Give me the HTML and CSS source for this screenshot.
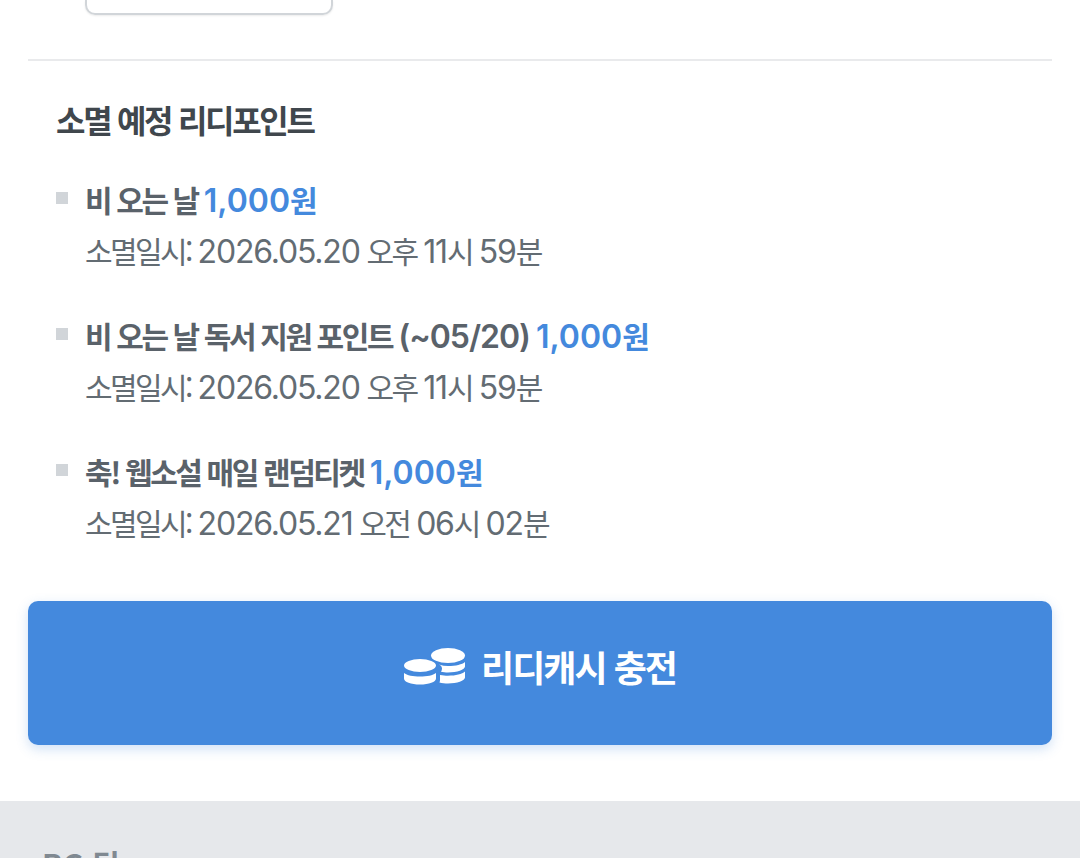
FILE: index.html
```html
<!DOCTYPE html>
<html lang="ko">
<head>
  <meta charset="UTF-8" />
  <title>소멸 예정 리디포인트</title>
  <link rel="stylesheet" href="styles.css">
</head>
<body>
  <div class="top-area">
    <div class="outline-button"></div>
  </div>

  <div class="expire-section">
    <h3 class="expire-title">소멸 예정 리디포인트</h3>
    <ul class="expire-list">
      <li class="expire-item">
        <div class="expire-name">비 오는 날 <span class="amount"><span class="num">1,000</span>원</span></div>
        <div class="expire-date">소멸일시: <span class="num">2026.05.20</span> 오후 <span class="num">11</span>시 <span class="num">59</span>분</div>
      </li>
      <li class="expire-item">
        <div class="expire-name">비 오는 날 독서 지원 포인트 <span class="num">(~05/20)</span> <span class="amount"><span class="num">1,000</span>원</span></div>
        <div class="expire-date">소멸일시: <span class="num">2026.05.20</span> 오후 <span class="num">11</span>시 <span class="num">59</span>분</div>
      </li>
      <li class="expire-item">
        <div class="expire-name">축! 웹소설 매일 랜덤티켓 <span class="amount"><span class="num">1,000</span>원</span></div>
        <div class="expire-date">소멸일시: <span class="num">2026.05.21</span> 오전 <span class="num">06</span>시 <span class="num">02</span>분</div>
      </li>
    </ul>
  </div>

  <div class="charge-wrap">
    <div class="charge-button">
      <svg class="coin-icon" width="62" height="40" viewBox="0 0 62 40">
        <g fill="#fff">
          <ellipse cx="44" cy="7.500" rx="17" ry="7.500"/>
          <path d="M35 16.500c3 1 6 1.500 9 1.500 8 0 14-1.500 17-4v4.500c0 3-8 6-17 6-2.500 0-5-.2-7-.7 .6-1 1-2 1-3.300 0-1.500-1-3-3-4z"/>
          <path d="M36 27c3 .5 5 .7 8 .7 8 0 14-1.700 17-4.200v6c0 3-8 6-17 6-3 0-6-.3-8.500-1 .3-.7.500-1.500.500-2.500z"/>
          <ellipse cx="16" cy="17.500" rx="16" ry="6.500"/>
          <path d="M0 25c3 2.500 9 3.500 16 3.500s13-1 16-3.500v5.500c0 3.500-7 6-16 6S0 34 0 30.500z"/>
        </g>
      </svg>
      <span class="charge-label">리디캐시 충전</span>
    </div>
  </div>

  <div class="footer">
    <div class="footer-title">RG 팀</div>
  </div>
</body>
</html>
```

FILE: styles.css
```css
html, body {
  height: 858px;
  overflow: hidden;
}

body {
  margin: 0;
  background-color: #fff;
  font-family: "Noto Sans CJK KR", "Noto Sans", sans-serif;
  color: #40474d;
}

.top-area {
  height: 59px;
  margin: 0 28px;
  border-bottom: 2px solid #e9eaec;
}

.outline-button {
  width: 248px;
  height: 15px;
  margin-left: 57px;
  box-sizing: border-box;
  border: 2px solid #d1d5d9;
  border-top: 0;
  border-radius: 0 0 10px 10px;
  box-shadow: 0 1px 2px rgba(0, 0, 0, 0.08);
}

.expire-section {
  padding: 34px 56px 0;
}

.expire-title {
  margin: 0;
  font-size: 32px;
  line-height: 48px;
  font-weight: 700;
  letter-spacing: -2.3px;
  color: #40474d;
}

.expire-list {
  list-style: none;
  margin: 32px 0 0;
  padding: 0;
}

.expire-item {
  position: relative;
  padding-left: 29px;
  margin-bottom: 34px;
}

.expire-item::before {
  content: "";
  position: absolute;
  left: 0;
  top: 17px;
  width: 12px;
  height: 12px;
  background-color: #d1d5d9;
}

.expire-name {
  font-size: 30px;
  line-height: 48px;
  font-weight: 700;
  letter-spacing: -2.4px;
  color: #5a626a;
}

.amount {
  color: #4489dd;
}

.expire-date {
  font-size: 30px;
  line-height: 54px;
  letter-spacing: -2.6px;
  word-spacing: 1px;
  color: #636c73;
}

.num {
  font-family: "Inter", "Noto Sans CJK KR", sans-serif;
  font-size: 32px;
  line-height: 1;
  letter-spacing: -1.2px;
}

.expire-name .num {
  font-weight: 600;
  letter-spacing: -1px;
}

.expire-name .amount .num {
  letter-spacing: 0;
}

.charge-wrap {
  margin: 0 28px;
  padding-top: 18px;
}

.charge-button {
  height: 144px;
  box-sizing: border-box;
  padding: 0 0 10px;
  display: flex;
  justify-content: center;
  align-items: center;
  gap: 15px;
  background-color: #4489dd;
  border-radius: 10px;
  box-shadow: 0 4px 12px rgba(68, 137, 221, 0.25);
  color: #fff;
  font-size: 36px;
  font-weight: 700;
  letter-spacing: -2px;
}

.charge-label {
  margin-bottom: 4px;
}

.footer {
  margin-top: 56px;
  height: 57px;
  box-sizing: border-box;
  background-color: #e6e8eb;
  padding: 42px 42px 0;
  overflow: hidden;
}

.footer-title {
  font-size: 30px;
  line-height: 40px;
  font-weight: 700;
  color: #808991;
}
```
